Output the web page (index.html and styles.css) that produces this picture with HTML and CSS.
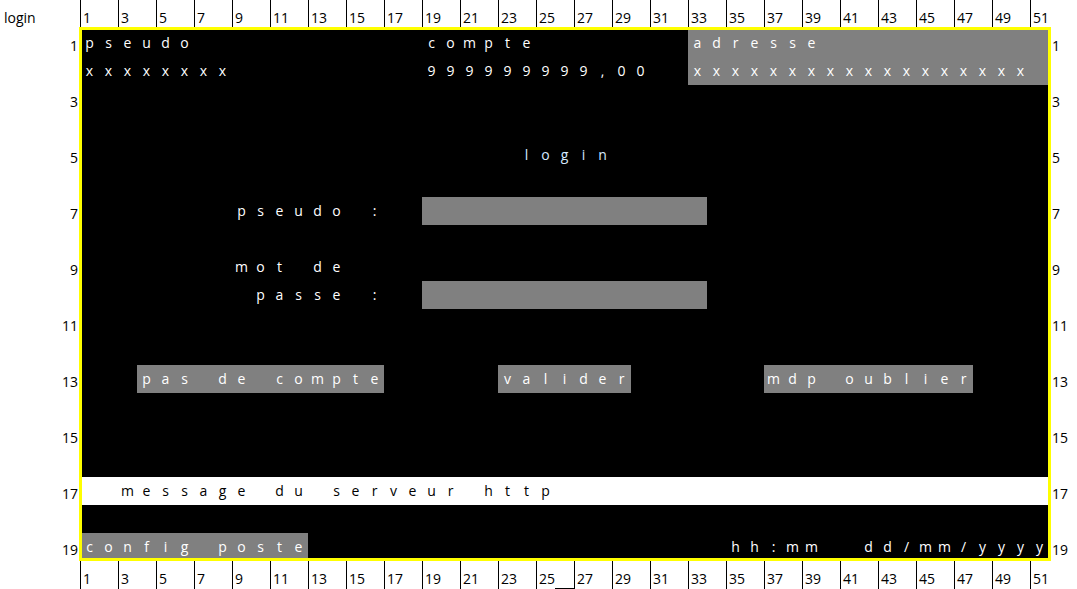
FILE: index.html
```
<!DOCTYPE html>
<html lang="fr">
<head>
<meta charset="utf-8">
<title>login</title>
<link rel="stylesheet" href="styles.css">
</head>
<body>
<div class="page">
  <div class="corner">login</div>
  <div class="ruler top"><span class="tk">1</span><span></span><span class="tk">3</span><span></span><span class="tk">5</span><span></span><span class="tk">7</span><span></span><span class="tk">9</span><span></span><span class="tk">11</span><span></span><span class="tk">13</span><span></span><span class="tk">15</span><span></span><span class="tk">17</span><span></span><span class="tk">19</span><span></span><span class="tk">21</span><span></span><span class="tk">23</span><span></span><span class="tk">25</span><span></span><span class="tk">27</span><span></span><span class="tk">29</span><span></span><span class="tk">31</span><span></span><span class="tk">33</span><span></span><span class="tk">35</span><span></span><span class="tk">37</span><span></span><span class="tk">39</span><span></span><span class="tk">41</span><span></span><span class="tk">43</span><span></span><span class="tk">45</span><span></span><span class="tk">47</span><span></span><span class="tk">49</span><span></span><span class="tk">51</span></div>
  <div class="blank"></div>

  <div class="rows left"><span>1</span><span></span><span>3</span><span></span><span>5</span><span></span><span>7</span><span></span><span>9</span><span></span><span>11</span><span></span><span>13</span><span></span><span>15</span><span></span><span>17</span><span></span><span>19</span></div>

  <div class="sheet">
    <div class="fill addr"></div>
    <div class="fill in1"></div>
    <div class="fill in2"></div>
    <div class="fill msg"></div>

    <div class="t c-pseudo"><span>p</span><span>s</span><span>e</span><span>u</span><span>d</span><span>o</span></div>
    <div class="t c-compte"><span>c</span><span>o</span><span>m</span><span>p</span><span>t</span><span>e</span></div>
    <div class="t c-adresse"><span>a</span><span>d</span><span>r</span><span>e</span><span>s</span><span>s</span><span>e</span></div>

    <div class="t c-xs"><span>x</span><span>x</span><span>x</span><span>x</span><span>x</span><span>x</span><span>x</span><span>x</span></div>
    <div class="t c-num"><span>9</span><span>9</span><span>9</span><span>9</span><span>9</span><span>9</span><span>9</span><span>9</span><span>9</span><span>,</span><span>0</span><span>0</span></div>
    <div class="t c-addrx"><span>x</span><span>x</span><span>x</span><span>x</span><span>x</span><span>x</span><span>x</span><span>x</span><span>x</span><span>x</span><span>x</span><span>x</span><span>x</span><span>x</span><span>x</span><span>x</span><span>x</span><span>x</span></div>

    <div class="t c-login"><span>l</span><span>o</span><span>g</span><span>i</span><span>n</span></div>

    <div class="t c-pseudo2"><span>p</span><span>s</span><span>e</span><span>u</span><span>d</span><span>o</span><span></span><span>:</span></div>
    <div class="t c-mot"><span>m</span><span>o</span><span>t</span><span></span><span>d</span><span>e</span></div>
    <div class="t c-passe"><span>p</span><span>a</span><span>s</span><span>s</span><span>e</span><span></span><span>:</span></div>

    <div class="t btn b-compte"><span>p</span><span>a</span><span>s</span><span></span><span>d</span><span>e</span><span></span><span>c</span><span>o</span><span>m</span><span>p</span><span>t</span><span>e</span></div>
    <div class="t btn b-valider"><span>v</span><span>a</span><span>l</span><span>i</span><span>d</span><span>e</span><span>r</span></div>
    <div class="t btn b-oublier"><span>m</span><span>d</span><span>p</span><span></span><span>o</span><span>u</span><span>b</span><span>l</span><span>i</span><span>e</span><span>r</span></div>

    <div class="t c-msg"><span>m</span><span>e</span><span>s</span><span>s</span><span>a</span><span>g</span><span>e</span><span></span><span>d</span><span>u</span><span></span><span>s</span><span>e</span><span>r</span><span>v</span><span>e</span><span>u</span><span>r</span><span></span><span>h</span><span>t</span><span>t</span><span>p</span></div>

    <div class="t btn b-config"><span>c</span><span>o</span><span>n</span><span>f</span><span>i</span><span>g</span><span></span><span>p</span><span>o</span><span>s</span><span>t</span><span>e</span></div>
    <div class="t c-time"><span>h</span><span>h</span><span>:</span><span>m</span><span>m</span></div>
    <div class="t c-date"><span>d</span><span>d</span><span>/</span><span>m</span><span>m</span><span>/</span><span>y</span><span>y</span><span>y</span><span>y</span></div>
  </div>

  <div class="rows right"><span>1</span><span></span><span>3</span><span></span><span>5</span><span></span><span>7</span><span></span><span>9</span><span></span><span>11</span><span></span><span>13</span><span></span><span>15</span><span></span><span>17</span><span></span><span>19</span></div>

  <div class="blank"></div>
  <div class="ruler bottom"><span class="tk">1</span><span></span><span class="tk">3</span><span></span><span class="tk">5</span><span></span><span class="tk">7</span><span></span><span class="tk">9</span><span></span><span class="tk">11</span><span></span><span class="tk">13</span><span></span><span class="tk">15</span><span></span><span class="tk">17</span><span></span><span class="tk">19</span><span></span><span class="tk">21</span><span></span><span class="tk">23</span><span></span><span class="tk">25</span><span class="sel"></span><span class="tk">27</span><span></span><span class="tk">29</span><span></span><span class="tk">31</span><span></span><span class="tk">33</span><span></span><span class="tk">35</span><span></span><span class="tk">37</span><span></span><span class="tk">39</span><span></span><span class="tk">41</span><span></span><span class="tk">43</span><span></span><span class="tk">45</span><span></span><span class="tk">47</span><span></span><span class="tk">49</span><span></span><span class="tk">51</span></div>
  <div class="blank"></div>
</div>
</body>
</html>
```
FILE: styles.css
```
* {
  box-sizing: border-box;
  margin: 0;
  padding: 0;
}

html,
body {
  background: #ffffff;
}

body {
  font-family: "Open Sans", "Liberation Sans", sans-serif;
  font-size: 14px;
  color: #000000;
  overflow: hidden;
}

.page {
  display: grid;
  grid-template-columns: 80px 969px 1fr;
  grid-template-rows: 29px 532px 28px;
  width: 1077px;
  height: 589px;
}

.corner {
  padding: 8px 0 0 4px;
  line-height: 20px;
}

/* column rulers */
.ruler {
  display: grid;
  grid-template-columns: repeat(51, 19px);
}

.ruler > span {
  line-height: 20px;
  white-space: nowrap;
}

.ruler .tk {
  border-left: 1px solid #000000;
  padding: 8px 0 0 2px;
}

.ruler .sel {
  border-bottom: 1px solid #000000;
}

/* row labels */
.rows {
  display: grid;
  grid-template-rows: repeat(19, 28px);
}

.rows > span {
  align-self: end;
  line-height: 22px;
}

.rows.left > span {
  text-align: right;
  padding-right: 2px;
}

.rows.right > span {
  padding-left: 3px;
}

/* the sheet */
.sheet {
  position: relative;
  background: #000000;
  color: #ffffff;
  display: grid;
  grid-template-columns: repeat(51, 19px);
  grid-template-rows: repeat(19, 28px);
}

.sheet::after {
  content: "";
  position: absolute;
  left: -1px;
  top: -2px;
  right: -2px;
  bottom: 0;
  border: 3px solid #ffff00;
  pointer-events: none;
}

.fill {
  background: #808080;
}

.t {
  display: grid;
  grid-auto-flow: column;
  grid-auto-columns: 19px;
  line-height: 28px;
  white-space: nowrap;
}

.t > span {
  text-align: center;
}

.btn {
  background: #808080;
}

.addr { grid-column: 33 / span 19; grid-row: 1 / span 2; }
.in1 { grid-column: 19 / span 15; grid-row: 7; }
.in2 { grid-column: 19 / span 15; grid-row: 10; }
.msg { grid-column: 1 / span 51; grid-row: 17; background: #ffffff; }

.c-pseudo { grid-column: 1 / span 6; grid-row: 1; }
.c-compte { grid-column: 19 / span 6; grid-row: 1; }
.c-adresse { grid-column: 33 / span 7; grid-row: 1; }
.c-xs { grid-column: 1 / span 8; grid-row: 2; }
.c-num { grid-column: 19 / span 12; grid-row: 2; }
.c-addrx { grid-column: 33 / span 18; grid-row: 2; }
.c-login { grid-column: 24 / span 5; grid-row: 5; color: #d6e9ff; }
.c-pseudo2 { grid-column: 9 / span 8; grid-row: 7; }
.c-mot { grid-column: 9 / span 6; grid-row: 9; }
.c-passe { grid-column: 10 / span 7; grid-row: 10; }
.b-compte { grid-column: 4 / span 13; grid-row: 13; }
.b-valider { grid-column: 23 / span 7; grid-row: 13; }
.b-oublier { grid-column: 37 / span 11; grid-row: 13; }
.c-msg { grid-column: 3 / span 23; grid-row: 17; color: #000000; }
.b-config { grid-column: 1 / span 12; grid-row: 19; }
.c-time { grid-column: 35 / span 5; grid-row: 19; }
.c-date { grid-column: 42 / span 10; grid-row: 19; }
```
